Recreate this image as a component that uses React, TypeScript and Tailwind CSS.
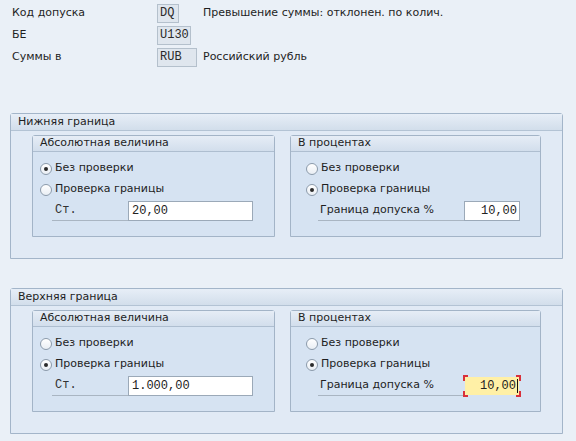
import React from "react";

const sans = "font-['DejaVu_Sans',Verdana,sans-serif]";
const mono = "font-['Liberation_Mono','Courier_New',monospace]";

function Radio({ checked }: { checked: boolean }) {
  return (
    <span className="flex h-[12px] w-[12px] flex-none items-center justify-center rounded-full border border-[#8c9bab] bg-gradient-to-b from-[#ffffff] to-[#e9eef4]">
      {checked && <span className="h-[4px] w-[4px] rounded-full bg-[#2b2b2b]" />}
    </span>
  );
}

function RadioRow({ checked, label }: { checked: boolean; label: string }) {
  return (
    <div className="flex h-[21px] items-center gap-[3px]">
      <Radio checked={checked} />
      <span className="text-[11px] text-[#1e1e1e]">{label}</span>
    </div>
  );
}

function TopRow({ label, code, codeWidth, text }: { label: string; code: string; codeWidth: string; text?: string }) {
  return (
    <div className="flex h-[22px] items-center">
      <span className="w-[157px] pl-[12px] text-[11px] text-[#1e1e1e]">{label}</span>
      <span className="w-[46px]">
        <span
          className={`flex h-[19px] items-center border border-[#b4c0cc] bg-[#dfe6ee] pl-[2px] text-[12px] text-[#2a2a2a] ${mono} ${codeWidth}`}
        >
          {code}
        </span>
      </span>
      {text && <span className="text-[11px] text-[#1e1e1e]">{text}</span>}
    </div>
  );
}

function FocusedInput({ value }: { value: string }) {
  return (
    <div className="relative ml-[-1px] h-[22px] w-[58px] p-[2px]">
      <div className={`flex h-full w-full items-center justify-end bg-[#fff0a6] pr-[1px] text-[12px] text-[#222] ${mono}`}>
        {value}
        <span className="ml-[1px] h-[14px] w-px bg-[#111]" />
      </div>
      <span className="absolute left-0 top-0 h-[6px] w-[5px] border-l-2 border-t-2 border-[#d9303a]" />
      <span className="absolute right-0 top-0 h-[6px] w-[5px] border-r-2 border-t-2 border-[#d9303a]" />
      <span className="absolute bottom-0 left-0 h-[6px] w-[5px] border-b-2 border-l-2 border-[#d9303a]" />
      <span className="absolute bottom-0 right-0 h-[6px] w-[5px] border-b-2 border-r-2 border-[#d9303a]" />
    </div>
  );
}

function InnerBox({
  title,
  width,
  padLeft,
  children,
}: {
  title: string;
  width: string;
  padLeft: string;
  children: React.ReactNode;
}) {
  return (
    <div className={`flex h-[102px] flex-col rounded-t-[3px] border border-[#a3b4c7] bg-[#d6e3f2] ${width}`}>
      <div className="flex h-[16px] items-center border-b border-[#aebed0] bg-gradient-to-b from-[#e6edf6] to-[#d2deec] pl-[7px] text-[11px] text-[#1e1e1e]">
        {title}
      </div>
      <div className={`flex flex-col pt-[6px] ${padLeft}`}>{children}</div>
    </div>
  );
}

function Section({ title, upper }: { title: string; upper: boolean }) {
  return (
    <div className="ml-[10px] flex h-[146px] w-[553px] flex-col rounded-t-[3px] border border-[#a3b5c9] bg-[#e1eaf5]">
      <div className="flex h-[17px] items-center border-b border-[#b3c3d4] bg-gradient-to-b from-[#e7eef7] to-[#d2deeb] pl-[7px] text-[11px] text-[#1e1e1e]">
        {title}
      </div>
      <div className="flex gap-[15px] pl-[21px] pt-[4px]">
        <InnerBox title="Абсолютная величина" width="w-[243px]" padLeft="pl-[7px]">
          <RadioRow checked={!upper} label="Без проверки" />
          <RadioRow checked={upper} label="Проверка границы" />
          <div className="flex h-[21px] items-center">
            <div className="ml-[12px] flex h-[20px] w-[76px] items-center border-b border-[#a9b5c2] pl-[3px]">
              <span className={`text-[12px] text-[#333] ${mono}`}>Ст.</span>
            </div>
            <div
              className={`flex h-[20px] w-[125px] items-center border border-[#9ba9b8] bg-white pl-[3px] text-[12px] text-[#222] ${mono}`}
            >
              {upper ? "1.000,00" : "20,00"}
            </div>
          </div>
        </InnerBox>
        <InnerBox title="В процентах" width="w-[251px]" padLeft="pl-[15px]">
          <RadioRow checked={false} label="Без проверки" />
          <RadioRow checked={true} label="Проверка границы" />
          <div className="flex h-[21px] items-center">
            <div className="ml-[12px] flex h-[20px] w-[146px] items-center border-b border-[#a9b5c2] pl-[2px]">
              <span className="text-[11px] text-[#1e1e1e]">Граница допуска %</span>
            </div>
            {upper ? (
              <FocusedInput value="10,00" />
            ) : (
              <div
                className={`flex h-[20px] w-[56px] items-center justify-end border border-[#9ba9b8] bg-white pr-[2px] text-[12px] text-[#222] ${mono}`}
              >
                10,00
              </div>
            )}
          </div>
        </InnerBox>
      </div>
    </div>
  );
}

export default function App() {
  return (
    <div className={`h-[441px] w-[576px] overflow-hidden bg-[#eaf0f7] pt-[2px] ${sans}`}>
      <TopRow label="Код допуска" code="DQ" codeWidth="w-[22px]" text="Превышение суммы: отклонен. по колич." />
      <TopRow label="БЕ" code="U130" codeWidth="w-[34px]" />
      <TopRow label="Суммы в" code="RUB" codeWidth="w-[40px]" text="Российский рубль" />
      <div className="mt-[45px]">
        <Section title="Нижняя граница" upper={false} />
      </div>
      <div className="mt-[29px]">
        <Section title="Верхняя граница" upper={true} />
      </div>
    </div>
  );
}
